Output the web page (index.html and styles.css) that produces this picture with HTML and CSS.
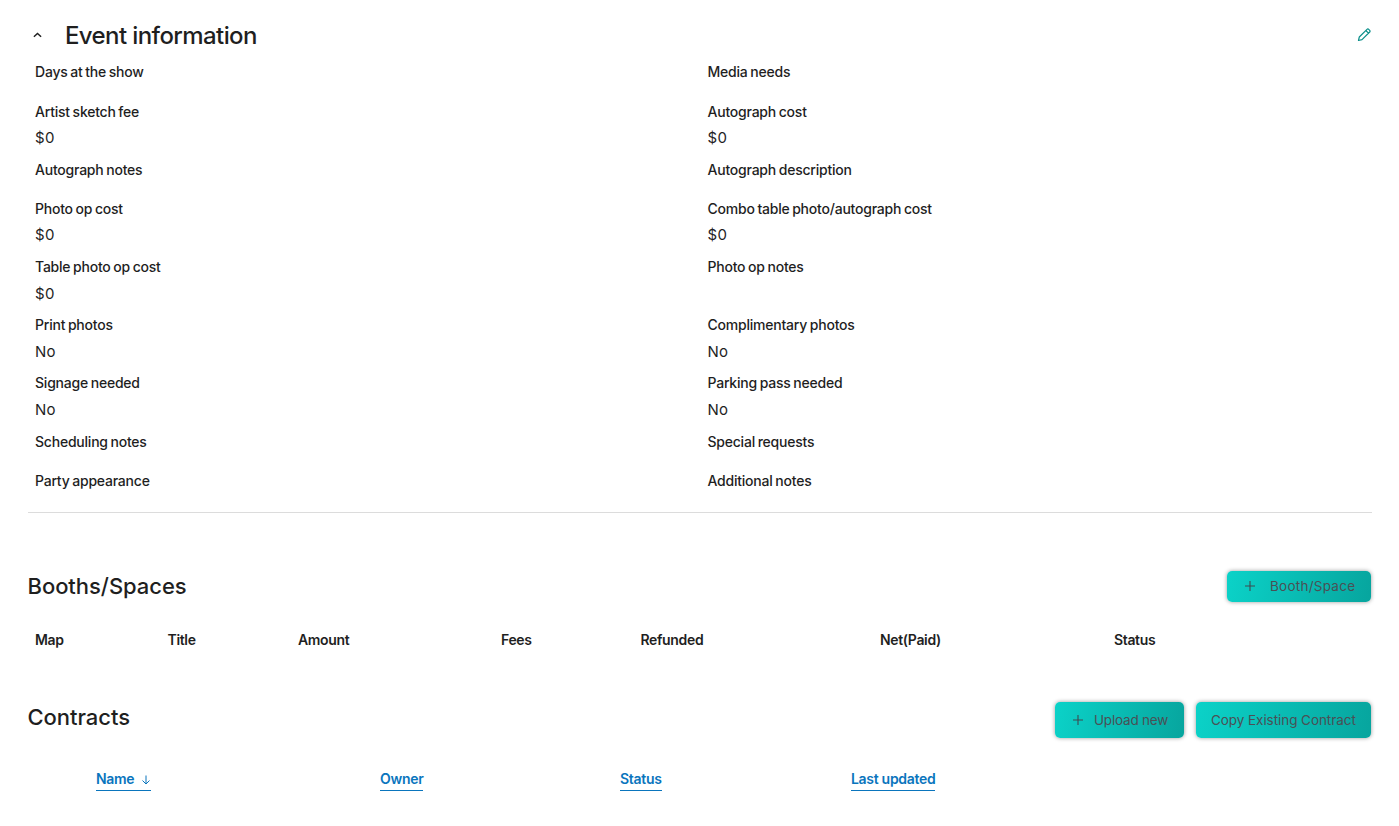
FILE: index.html
```html
<!DOCTYPE html>
<html lang="en">
<head>
<meta charset="utf-8">
<title>Event information</title>
<link rel="stylesheet" href="styles.css">
</head>
<body>
<main class="page">
  <section class="info">
    <header class="info-head">
      <svg class="chevron" viewBox="0 0 10 6" width="9" height="6"><path d="M1 5 L5 1.2 L9 5" fill="none" stroke="#1f1f1f" stroke-width="1.6"/></svg>
      <h1>Event information</h1>
      <svg class="pencil" viewBox="0 0 16 16" width="16" height="16"><path d="M2.5 13.5 L3.3 10 L11 2.3 a1.2 1.2 0 0 1 1.7 0 l1 1 a1.2 1.2 0 0 1 0 1.7 L6 12.7 Z M9.8 3.5 L12.5 6.2" fill="none" stroke="#0a8f8a" stroke-width="1.2" stroke-linejoin="round"/></svg>
    </header>
    <div class="fields">
      <div class="field"><div class="label">Days at the show</div></div>
      <div class="field"><div class="label">Media needs</div></div>
      <div class="field"><div class="label">Artist sketch fee</div><div class="value">$0</div></div>
      <div class="field"><div class="label">Autograph cost</div><div class="value">$0</div></div>
      <div class="field"><div class="label">Autograph notes</div></div>
      <div class="field"><div class="label">Autograph description</div></div>
      <div class="field"><div class="label">Photo op cost</div><div class="value">$0</div></div>
      <div class="field"><div class="label">Combo table photo/autograph cost</div><div class="value">$0</div></div>
      <div class="field"><div class="label">Table photo op cost</div><div class="value">$0</div></div>
      <div class="field"><div class="label">Photo op notes</div></div>
      <div class="field"><div class="label">Print photos</div><div class="value">No</div></div>
      <div class="field"><div class="label">Complimentary photos</div><div class="value">No</div></div>
      <div class="field"><div class="label">Signage needed</div><div class="value">No</div></div>
      <div class="field"><div class="label">Parking pass needed</div><div class="value">No</div></div>
      <div class="field"><div class="label">Scheduling notes</div></div>
      <div class="field"><div class="label">Special requests</div></div>
      <div class="field"><div class="label">Party appearance</div></div>
      <div class="field"><div class="label">Additional notes</div></div>
    </div>
  </section>

  <section class="booths">
    <header class="section-head">
      <h2>Booths/Spaces</h2>
      <div class="actions">
        <button class="btn btn-booth"><svg class="plus" viewBox="0 0 12 12" width="12" height="12"><path d="M6 1 V11 M1 6 H11" stroke="#3f4a50" stroke-width="1.1"/></svg><span>Booth/Space</span></button>
      </div>
    </header>
    <div class="booth-cols">
      <span>Map</span><span>Title</span><span>Amount</span><span>Fees</span><span>Refunded</span><span>Net(Paid)</span><span>Status</span>
    </div>
  </section>

  <section class="contracts">
    <header class="section-head">
      <h2>Contracts</h2>
      <div class="actions">
        <button class="btn btn-upload"><svg class="plus" viewBox="0 0 12 12" width="12" height="12"><path d="M6 1 V11 M1 6 H11" stroke="#3f4a50" stroke-width="1.1"/></svg><span>Upload new</span></button>
        <button class="btn btn-copy"><span>Copy Existing Contract</span></button>
      </div>
    </header>
    <div class="contract-cols">
      <div><a class="sort" href="#">Name <svg class="arrow" viewBox="0 0 10 10" width="10" height="10"><path d="M5 0.5 V9 M1.5 5.5 L5 9 L8.5 5.5" fill="none" stroke="#0a75bd" stroke-width="1"/></svg></a></div>
      <div><a class="sort" href="#">Owner</a></div>
      <div><a class="sort" href="#">Status</a></div>
      <div><a class="sort" href="#">Last updated</a></div>
    </div>
  </section>
</main>
</body>
</html>
```
FILE: styles.css
```css
* { box-sizing: border-box; }
html, body { margin: 0; padding: 0; background: #fff; }
body {
  font-family: "Inter", "Liberation Sans", sans-serif;
  color: #1f1f1f;
  height: 826px;
  overflow: hidden;
}
.page { padding: 17px 27px 0 28px; }

.info { border-bottom: 1px solid #dcdcdc; padding-bottom: 2.5px; }
.info-head { display: flex; align-items: center; height: 36px; padding-left: 5px; }
.chevron { flex: none; }
h1 {
  margin: 0 0 0 23px;
  font-size: 24px;
  font-weight: 500;
  letter-spacing: -0.6px;
  flex: 1;
}
.pencil { flex: none; }

.fields { display: grid; grid-template-columns: 672.5px 1fr; margin-top: 8.25px; }
.field { padding: 0 7px 12.1px; }
.label {
  font-size: 14px;
  line-height: 21px;
  font-weight: 500;
  margin-bottom: 6.3px;
  letter-spacing: -0.22px;
  word-spacing: -0.8px;
}
.value { font-size: 15px; line-height: 19px; margin-bottom: -0.3px; letter-spacing: 0.3px; }

.section-head { display: flex; justify-content: space-between; align-items: center; }
h2 { margin: 0 0 0 -0.5px; font-size: 22px; font-weight: 500; letter-spacing: -0.05px; }
.booths h2 { padding-bottom: 1px; }
.contracts h2 { padding-bottom: 6px; }
.actions { display: flex; gap: 12px; margin-right: 1px; }

.booths { margin-top: 58px; }
.booths .section-head { height: 31px; }

.btn {
  display: flex;
  align-items: center;
  border: 0;
  border-radius: 5px;
  background: linear-gradient(100deg, #0bd2c8 0%, #07a59e 100%);
  box-shadow: 0 0 4px rgba(0,0,0,0.4);
  color: #4a5055;
  font: 400 13.5px "Inter", "Liberation Sans", sans-serif;
  padding: 0;
  margin: 0;
}
.btn-booth { width: 144px; height: 31px; padding-left: 17px; gap: 14px; letter-spacing: 0.25px; }
.btn-upload { width: 129px; height: 36px; padding-left: 17px; gap: 10px; letter-spacing: -0.2px; }
.btn-copy { width: 175px; height: 36px; padding-left: 15px; letter-spacing: -0.06px; }
.plus { flex: none; }

.booth-cols {
  display: grid;
  grid-template-columns: 132.5px 130.5px 203px 139.5px 239.5px 234px 1fr;
  padding: 0 7px;
  margin-top: 27px;
  font-size: 14px;
  font-weight: 600;
  line-height: 21px;
  letter-spacing: -0.35px;
}

.contracts { margin-top: 52px; }
.contracts .section-head { height: 36px; }
.contract-cols {
  display: grid;
  grid-template-columns: 284px 240px 231px 1fr;
  padding-left: 68px;
  margin-top: 30px;
  font-size: 14px;
  font-weight: 600;
  letter-spacing: -0.3px;
}
.sort {
  display: inline-block;
  color: #0a75bd;
  text-decoration: none;
  border-bottom: 1px solid #0a75bd;
  line-height: 21px;
  height: 23px;
}
.arrow { margin-left: 3px; vertical-align: -1px; }
```
